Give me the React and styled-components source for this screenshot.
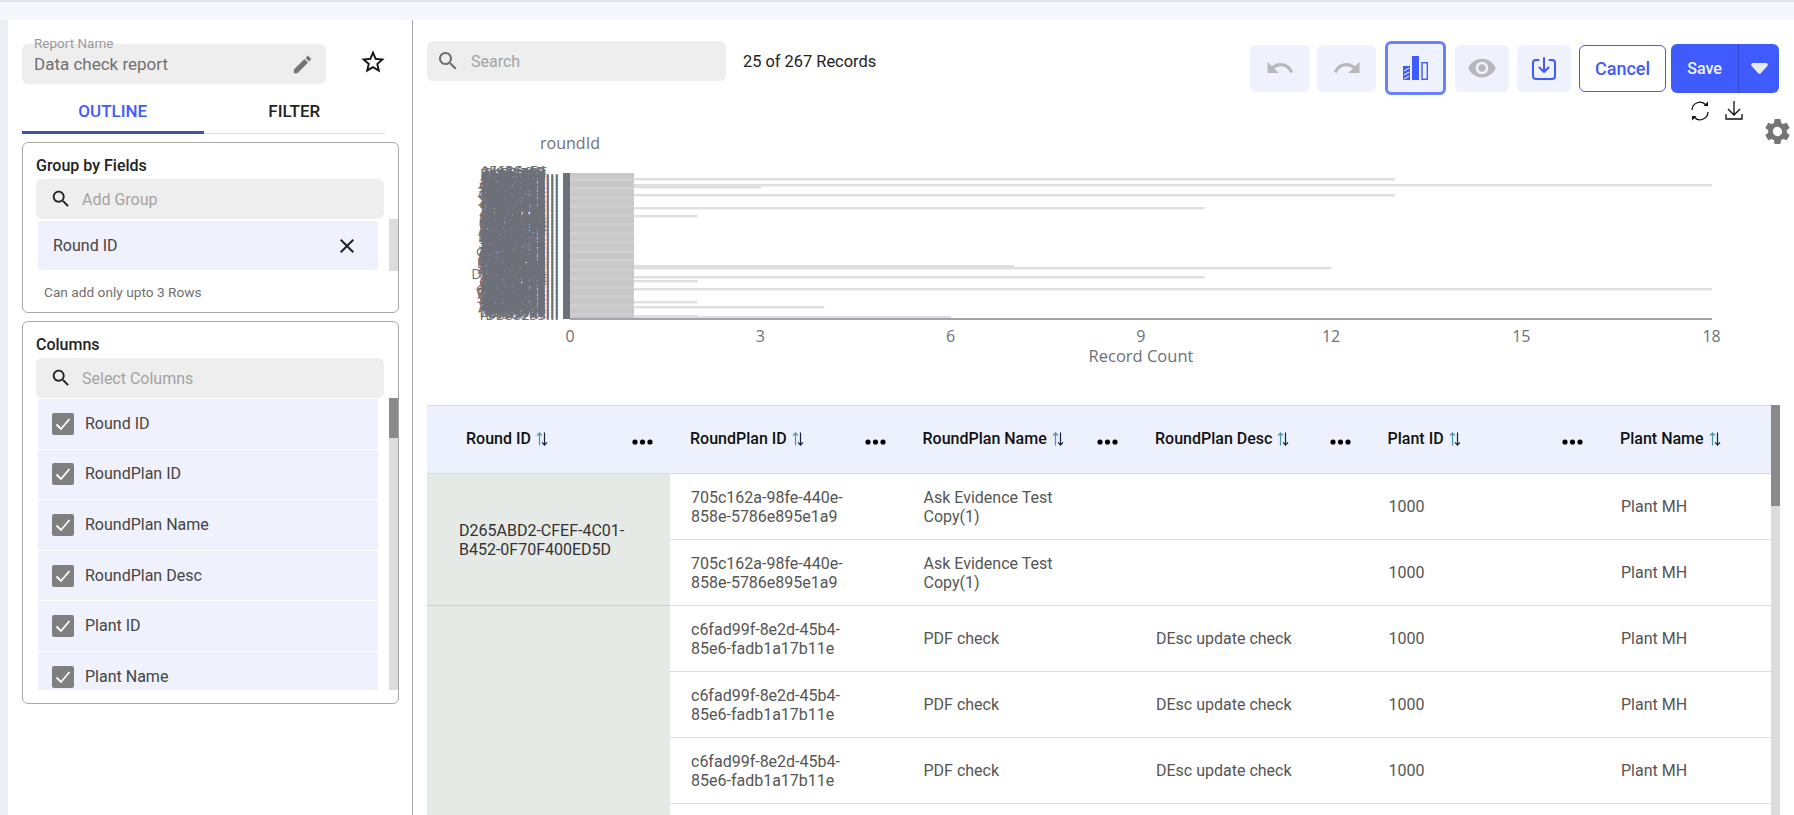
import React from "react";
import styled, { createGlobalStyle } from "styled-components";

const GlobalStyle = createGlobalStyle`
  html, body { margin: 0; padding: 0; height: 100%; overflow: hidden; background: #fff; }
  body { font-family: Roboto, "Liberation Sans", sans-serif; color: #333; }
  * { box-sizing: border-box; }
`;

// ---- page frame ----
const Page = styled.div`
  width: 1794px;
  height: 815px;
  display: flex;
  flex-direction: column;
  overflow: hidden;
`;
const TopStrip = styled.div`
  height: 20px;
  flex-shrink: 0;
  background: #f6f7fd;
  border-top: 2px solid #e2e3e9;
`;
const Body = styled.div`
  flex: 1;
  min-height: 0;
  display: flex;
`;
const LeftEdge = styled.div`
  width: 8px;
  background: #eceef4;
`;
const Sidebar = styled.aside`
  width: 405px;
  flex-shrink: 0;
  background: #fff;
  border-right: 1px solid #a9a9ad;
  padding: 24px 13px 0 14px;
`;
const Main = styled.main`
  flex: 1;
  min-width: 0;
  display: flex;
  flex-direction: column;
`;

// ---- sidebar ----
const NameRow = styled.div`
  display: flex;
  align-items: flex-start;
`;
const NameField = styled.div`
  position: relative;
  width: 304px;
  height: 40px;
  background: #eee;
  border-radius: 6px;
  display: flex;
  align-items: center;
  justify-content: space-between;
  padding: 0 12px 0 12px;
  font-size: 17px;
  color: #707070;
`;
const FloatLabel = styled.span`
  position: absolute;
  left: 12px;
  top: -8px;
  font-size: 13.5px;
  line-height: 14px;
  color: #9a9a9a;
`;
const StarWrap = styled.div`
  margin: 2px 0 0 33px;
  height: 32px;
  display: flex;
  align-items: center;
`;
const Tabs = styled.div`
  display: flex;
  width: 363px;
  height: 50px;
  border-bottom: 1px solid #dcdcdc;
`;
const Tab = styled.div`
  width: 182px;
  height: 50px;
  display: flex;
  align-items: center;
  justify-content: center;
  padding-top: 6px;
  font-size: 17px;
  font-weight: 500;
  color: ${(p) => (p.$active ? "#3f5bfe" : "#222")};
  border-bottom: 3px solid ${(p) => (p.$active ? "#3f51b5" : "transparent")};
`;
const Box = styled.section`
  width: 377px;
  margin-top: ${(p) => p.$mt}px;
  height: ${(p) => p.$h}px;
  border: 1px solid #a8a8a8;
  border-radius: 6px;
  padding-left: 13px;
`;
const BoxTitle = styled.h3`
  margin: 0;
  height: 36px;
  display: flex;
  align-items: center;
  padding: 9px 0 0 0;
  font-size: 16px;
  font-weight: 500;
  color: #222;
`;
const SearchField = styled.div`
  width: ${(p) => p.$w}px;
  height: 40px;
  background: #eee;
  border-radius: 6px;
  display: flex;
  align-items: center;
  gap: ${(p) => p.$gap}px;
  padding-left: ${(p) => p.$pl}px;
  font-size: 16px;
  color: #a3a3a3;
  flex-shrink: 0;
`;
const ListRow = styled.div`
  display: flex;
  padding-left: 2px;
  height: ${(p) => p.$h}px;
`;
const ListBody = styled.div`
  width: 340px;
  overflow: hidden;
  padding-top: ${(p) => p.$pt}px;
`;
const Chip = styled.div`
  height: 49px;
  background: #eff1fc;
  display: flex;
  align-items: center;
  justify-content: space-between;
  padding: 0 19px 0 15px;
  font-size: 16px;
  color: #444;
`;
const ColumnRow = styled.div`
  height: 49.6px;
  margin-bottom: 1px;
  background: #eff1fc;
  display: flex;
  align-items: center;
  gap: 11px;
  padding: 0 0 1px 14px;
  font-size: 16px;
  color: #444;
`;
const CheckBox = styled.span`
  width: 22px;
  height: 22px;
  background: #808080;
  border-radius: 2px;
  display: flex;
  align-items: center;
  justify-content: center;
  flex-shrink: 0;
  margin-top: 1px;
`;
const Track = styled.div`
  width: 9px;
  margin-left: ${(p) => p.$ml || 0}px;
  background: #dcdcdc;
  flex-shrink: 0;
`;
const Thumb = styled.div`
  height: ${(p) => p.$h}px;
  background: #8a8a8a;
`;
const Hint = styled.div`
  margin: 12px 0 0 8px;
  font-size: 13.7px;
  line-height: 18px;
  color: #6f6f6f;
`;

// ---- toolbar ----
const Toolbar = styled.div`
  height: 80px;
  flex-shrink: 0;
  display: flex;
  align-items: flex-start;
  padding: 21px 15px 0 14px;
`;
const Records = styled.div`
  margin-left: 17px;
  height: 40px;
  display: flex;
  align-items: center;
  font-size: 16.4px;
  color: #222;
`;
const Actions = styled.div`
  margin-left: auto;
  display: flex;
  align-items: center;
  height: 54px;
`;
const ToolButton = styled.div`
  width: ${(p) => p.$w}px;
  height: 47px;
  margin-left: ${(p) => p.$ml}px;
  border-radius: 6px;
  background: #eff1fc;
  display: flex;
  align-items: center;
  justify-content: center;
`;
const ChartToggle = styled.div`
  width: 61px;
  height: 54px;
  margin-left: 9px;
  background: #eff1fc;
  border: 3px solid #6a80ff;
  border-radius: 6px;
  display: flex;
  align-items: center;
  justify-content: center;
`;
const CancelButton = styled.div`
  width: 87px;
  height: 47px;
  margin-left: 8px;
  border: 1px solid #3f5bfe;
  border-radius: 6px;
  color: #3f5bfe;
  font-size: 18px;
  font-weight: 500;
  display: flex;
  align-items: center;
  justify-content: center;
`;
const SaveGroup = styled.div`
  margin-left: 5px;
  height: 49px;
  display: flex;
  border-radius: 6px;
  overflow: hidden;
  background: #3f5bfe;
  color: #f4f5ff;
`;
const SaveLabel = styled.div`
  width: 67px;
  display: flex;
  align-items: center;
  justify-content: center;
  font-size: 16px;
  font-weight: 500;
`;
const SaveCaret = styled.div`
  width: 41px;
  border-left: 1px solid #3349c8;
  display: flex;
  align-items: center;
  justify-content: center;
`;

// ---- chart ----
const ChartArea = styled.div`
  position: relative;
  height: 305px;
  flex-shrink: 0;
`;
const ChartSvg = styled.svg`
  display: block;
  width: 1381px;
  height: 305px;
`;
const ChartTools = styled.div`
  position: absolute;
  top: 0;
  left: 1277px;
  display: flex;
  gap: 15px;
`;
const GearWrap = styled.div`
  position: absolute;
  top: 16px;
  right: 1px;
`;

// ---- table ----
const TableRow = styled.div`
  flex: 1;
  min-height: 0;
  display: flex;
  padding-left: 14px;
`;
const TableWrap = styled.div`
  width: 1344px;
  overflow: hidden;
`;
const Table = styled.table`
  width: 1344px;
  table-layout: fixed;
  border-collapse: collapse;
`;
const Col = styled.col`
  width: ${(p) => p.$w}px;
`;
const Th = styled.th`
  height: 68px;
  padding: 0;
  background: #edf1fd;
  border-top: 1px solid #d8dbe6;
  border-bottom: 1px solid #d8dbe6;
  text-align: left;
  font-weight: 500;
`;
const HeadInner = styled.div`
  display: flex;
  align-items: center;
  justify-content: space-between;
  padding: 0 17px 2px ${(p) => p.$pl}px;
  font-size: 16px;
  color: #111;
`;
const HeadLabel = styled.span`
  display: flex;
  align-items: center;
  gap: 5px;
  white-space: nowrap;
`;
const Dots = styled.svg`
  margin-top: 6px;
  flex-shrink: 0;
`;
const Td = styled.td`
  height: 66px;
  padding: 0 22px 0 21px;
  border-bottom: 1px solid #dcdde0;
  font-size: 16px;
  line-height: 19px;
  color: #555;
`;
const GroupTd = styled(Td)`
  background: #e6eae6;
  padding: 0 20px 0 32px;
  color: #333;
  border-bottom: 1px solid #cdd1cd;
`;

const Icon = ({ d, size = 24, color = "#000" }) => (
  <svg width={size} height={size} viewBox="0 0 24 24" fill={color}>
    <path d={d} />
  </svg>
);

const paths = {
  pencil: "M3 17.25V21h3.75L17.81 9.94l-3.75-3.75L3 17.25zM20.71 7.04c.39-.39.39-1.02 0-1.41l-2.34-2.34c-.39-.39-1.02-.39-1.41 0l-1.83 1.83 3.75 3.75 1.83-1.83z",
  star: "M22 9.24l-7.19-.62L12 2 9.19 8.63 2 9.24l5.46 4.73L5.82 21 12 17.27 18.18 21l-1.63-7.03L22 9.24zM12 15.4l-3.76 2.27 1-4.28-3.32-2.88 4.38-.38L12 6.1l1.71 4.04 4.38.38-3.32 2.88 1 4.28L12 15.4z",
  search: "M15.5 14h-.79l-.28-.27C15.41 12.59 16 11.11 16 9.5 16 5.91 13.09 3 9.5 3S3 5.91 3 9.5 5.91 16 9.5 16c1.61 0 3.09-.59 4.23-1.57l.27.28v.79l5 4.99L20.49 19l-4.99-5zm-6 0C7.01 14 5 11.99 5 9.5S7.01 5 9.5 5 14 7.01 14 9.5 11.99 14 9.5 14z",
  close: "M19 6.41L17.59 5 12 10.59 6.41 5 5 6.41 10.59 12 5 17.59 6.41 19 12 13.41 17.59 19 19 17.59 13.41 12z",
  undo: "M12.5 8c-2.65 0-5.05.99-6.9 2.6L2 7v9h9l-3.62-3.62c1.39-1.16 3.16-1.88 5.12-1.88 3.54 0 6.55 2.31 7.6 5.5l2.37-.78C21.08 11.03 17.15 8 12.5 8z",
  redo: "M18.4 10.6C16.55 8.99 14.15 8 11.5 8c-4.65 0-8.58 3.03-9.96 7.22L3.9 16c1.05-3.19 4.05-5.5 7.6-5.5 1.95 0 3.73.72 5.12 1.88L13 16h9V7l-3.6 3.6z",
  eye: "M12 4.5C7 4.5 2.73 7.61 1 12c1.73 4.39 6 7.5 11 7.5s9.27-3.11 11-7.5c-1.73-4.39-6-7.5-11-7.5zM12 17c-2.76 0-5-2.24-5-5s2.24-5 5-5 5 2.24 5 5-2.24 5-5 5zm0-8c-1.66 0-3 1.34-3 3s1.34 3 3 3 3-1.34 3-3-1.34-3-3-3z",
  gear: "M19.14 12.94c.04-.3.06-.61.06-.94 0-.32-.02-.64-.07-.94l2.03-1.58c.18-.14.23-.41.12-.61l-1.92-3.32c-.12-.22-.37-.29-.59-.22l-2.39.96c-.5-.38-1.03-.7-1.62-.94l-.36-2.54c-.04-.24-.24-.41-.48-.41h-3.84c-.24 0-.43.17-.47.41l-.36 2.54c-.59.24-1.13.57-1.62.94l-2.39-.96c-.22-.08-.47 0-.59.22L2.74 8.87c-.12.21-.08.47.12.61l2.03 1.58c-.05.3-.09.63-.09.94s.02.64.07.94l-2.03 1.58c-.18.14-.23.41-.12.61l1.92 3.32c.12.22.37.29.59.22l2.39-.96c.5.38 1.03.7 1.62.94l.36 2.54c.05.24.24.41.48.41h3.84c.24 0 .44-.17.47-.41l.36-2.54c.59-.24 1.13-.56 1.62-.94l2.39.96c.22.08.47 0 .59-.22l1.92-3.32c.12-.22.07-.47-.12-.61l-2.01-1.58zM12 15.6c-1.98 0-3.6-1.62-3.6-3.6s1.62-3.6 3.6-3.6 3.6 1.62 3.6 3.6-1.62 3.6-3.6 3.6z",
};

const SortIcon = () => (
  <svg width="12" height="14" viewBox="0 0 12 14" fill="none" strokeWidth="1.2">
    <path d="M3.500 13.500V1M1 3.700l2.500-2.700L6 3.700" stroke="#4a93ab" />
    <path d="M8.500 .5V13M6 10.300l2.500 2.700 2.500-2.700" stroke="#14233f" />
  </svg>
);

const ThreeDots = () => (
  <Dots width="21" height="6" viewBox="0 0 21 6" fill="#000">
    <circle cx="3" cy="3" r="2.6" />
    <circle cx="10.5" cy="3" r="2.6" />
    <circle cx="18" cy="3" r="2.6" />
  </Dots>
);

const Check = () => (
  <svg width="16" height="14" viewBox="0 0 16 14" fill="none">
    <path d="M1.500 7.500l4.500 4.500L14.500 2" stroke="#fff" strokeWidth="1.8" />
  </svg>
);

// chart data: y position and record count of the long bars
const longBars = [
  [178, 13], [184, 18], [186, 3], [194, 13], [207, 10], [215, 2], [265, 7], [267, 12],
  [276, 10], [280, 2], [288, 18], [301, 2], [306, 4], [315, 2], [316, 6],
];
const UNIT = 63.42;
const hex = "0123456789ABCDEFabcdef";
const fakeIds = Array.from({ length: 190 }, (_, i) => {
  let s = "";
  let seed = (i + 7) * 48271;
  for (let k = 0; k < 8; k++) {
    seed = (seed * 48271 + 11) % 2147483647;
    s += hex[seed % hex.length];
  }
  return s;
});

const RoundChart = () => (
  <ChartSvg viewBox="413 100 1381 305">
    <text x="570" y="149" textAnchor="middle" fontFamily="Open Sans" fontSize="16" fill="#6e7079">roundId</text>
    {fakeIds.map((id, i) => (
      <text key={i} x="559" y={176 + i * 0.76} textAnchor="end" fontFamily="Open Sans" fontSize="14" fill="#6e7079">
        {id}<tspan fontSize="17">...</tspan>
      </text>
    ))}
    <rect x="563" y="173" width="7" height="146" fill="#6e7079" />
    <rect x="570" y="173" width="64" height="145" fill="#c8c8c8" />
    {Array.from({ length: 16 }, (_, i) => (
      <rect key={i} x="570" y={178 + i * 9} width="64" height="3" fill="#cecece" />
    ))}
    {longBars.map(([y, n], i) => (
      <rect key={i} x="634" y={y} width={n * UNIT - UNIT} height="2.400" fill="#dfdfdf" />
    ))}
    <rect x="570" y="318" width="1142" height="2" fill="#a3a3ab" />
    {[0, 3, 6, 9, 12, 15, 18].map((n) => (
      <text key={n} x={570 + n * UNIT} y="342" textAnchor="middle" fontFamily="Open Sans" fontSize="16" fill="#6e7079">{n}</text>
    ))}
    <text x="1141" y="362" textAnchor="middle" fontFamily="Open Sans" fontSize="16.500" fill="#6e7079">Record Count</text>
  </ChartSvg>
);

const columns = ["Round ID", "RoundPlan ID", "RoundPlan Name", "RoundPlan Desc", "Plant ID", "Plant Name"];
const colWidths = [243, 232.5, 232.5, 232.5, 232.5, 171];
const uuid1 = ["705c162a-98fe-440e-", "858e-5786e895e1a9"];
const uuid2 = ["c6fad99f-8e2d-45b4-", "85e6-fadb1a17b11e"];

const TwoLines = ({ lines }) => (
  <>
    {lines[0]}
    <br />
    {lines[1]}
  </>
);

const App = () => (
  <Page>
    <GlobalStyle />
    <TopStrip />
    <Body>
      <LeftEdge />
      <Sidebar>
        <NameRow>
          <NameField>
            <FloatLabel>Report Name</FloatLabel>
            Data check report
            <Icon d={paths.pencil} color="#757575" size={23} />
          </NameField>
          <StarWrap>
            <Icon d={paths.star} size={28} color="#111" />
          </StarWrap>
        </NameRow>
        <Tabs>
          <Tab $active>OUTLINE</Tab>
          <Tab>FILTER</Tab>
        </Tabs>
        <Box $mt={8} $h={171}>
          <BoxTitle>Group by Fields</BoxTitle>
          <SearchField $w={348} $gap={10} $pl={14}>
            <Icon d={paths.search} size={22} color="#222" />
            Add Group
          </SearchField>
          <ListRow $h={52}>
            <ListBody $pt={2}>
              <Chip>
                Round ID
                <Icon d={paths.close} size={24} color="#222" />
              </Chip>
            </ListBody>
            <Track $ml={11} />
          </ListRow>
          <Hint>Can add only upto 3 Rows</Hint>
        </Box>
        <Box $mt={8} $h={383}>
          <BoxTitle>Columns</BoxTitle>
          <SearchField $w={348} $gap={10} $pl={14}>
            <Icon d={paths.search} size={22} color="#222" />
            Select Columns
          </SearchField>
          <ListRow $h={292}>
            <ListBody $pt={1}>
              {["Round ID", "RoundPlan ID", "RoundPlan Name", "RoundPlan Desc", "Plant ID", "Plant Name"].map((name) => (
                <ColumnRow key={name}>
                  <CheckBox><Check /></CheckBox>
                  {name}
                </ColumnRow>
              ))}
            </ListBody>
            <Track $ml={11}>
              <Thumb $h={40} />
            </Track>
          </ListRow>
        </Box>
      </Sidebar>
      <Main>
        <Toolbar>
          <SearchField $w={299} $gap={11} $pl={9}>
            <Icon d={paths.search} size={24} color="#6f6f6f" />
            Search
          </SearchField>
          <Records>25 of 267 Records</Records>
          <Actions>
            <ToolButton $w={59} $ml={0}><Icon d={paths.undo} size={30} color="#b8b8bc" /></ToolButton>
            <ToolButton $w={59} $ml={8}><Icon d={paths.redo} size={30} color="#b8b8bc" /></ToolButton>
            <ChartToggle>
              <svg width="25" height="24" viewBox="0 0 25 24">
                <rect x="0" y="10" width="7" height="14" fill="#3f5bfe" />
                <path d="M1 15l5-3M1 19l5-3M1 23l5-3" stroke="#dfe3ff" strokeWidth="1.2" />
                <rect x="9" y="0" width="7" height="24" fill="#3f5bfe" />
                <rect x="19" y="6.700" width="5.300" height="16.600" fill="none" stroke="#3f5bfe" strokeWidth="1.400" />
              </svg>
            </ChartToggle>
            <ToolButton $w={54} $ml={9}><Icon d={paths.eye} size={30} color="#b8b8bc" /></ToolButton>
            <ToolButton $w={54} $ml={8}>
              <svg width="24" height="23" viewBox="0 0 24 23" fill="none" stroke="#3f5bfe" strokeWidth="2" strokeLinecap="round" strokeLinejoin="round">
                <path d="M6.500 3H4a3 3 0 0 0-3 3v13a3 3 0 0 0 3 3h16a3 3 0 0 0 3-3V6a3 3 0 0 0-3-3h-2.500" />
                <path d="M12 1v14M7.500 10.500l4.500 4.500 4.500-4.500" />
              </svg>
            </ToolButton>
            <CancelButton>Cancel</CancelButton>
            <SaveGroup>
              <SaveLabel>Save</SaveLabel>
              <SaveCaret>
                <svg width="17" height="11" viewBox="0 0 17 11" fill="#e8e8f0">
                  <path d="M2 0h13c1.600 0 2.400 1.800 1.400 3L9.800 10.200c-.7.800-1.900.8-2.600 0L.6 3C-.4 1.800.4 0 2 0z" />
                </svg>
              </SaveCaret>
            </SaveGroup>
          </Actions>
        </Toolbar>
        <ChartArea>
          <RoundChart />
          <ChartTools>
            <svg width="20" height="22" viewBox="0 0 20 22" fill="none" stroke="#111" strokeWidth="1.3">
              <path d="M2 10a8 8 0 0 1 14-5" />
              <path d="M18 12a8 8 0 0 1-14 5" />
              <path d="M13.500 6h4.500V1.500z" fill="#111" stroke="none" />
              <path d="M6.500 16H2v4.500z" fill="#111" stroke="none" />
            </svg>
            <svg width="18" height="20" viewBox="0 0 18 20" fill="none" stroke="#111" strokeWidth="1.3">
              <path d="M9 1v14M3 9l6 6 6-6M1 14v5h16v-5" />
            </svg>
          </ChartTools>
          <GearWrap><Icon d={paths.gear} size={31} color="#757575" /></GearWrap>
        </ChartArea>
        <TableRow>
          <TableWrap>
            <Table>
              <colgroup>
                {colWidths.map((w, i) => <Col key={i} $w={w} />)}
              </colgroup>
              <thead>
                <tr>
                  {columns.map((c, i) => (
                    <Th key={c}>
                      <HeadInner $pl={i === 0 ? 39 : 20}>
                        <HeadLabel>{c} <SortIcon /></HeadLabel>
                        {i < 5 && <ThreeDots />}
                      </HeadInner>
                    </Th>
                  ))}
                </tr>
              </thead>
              <tbody>
                {[0, 1].map((r) => (
                  <tr key={r}>
                    {r === 0 && (
                      <GroupTd rowSpan={2}>D265ABD2-CFEF-4C01-<br />B452-0F70F400ED5D</GroupTd>
                    )}
                    <Td><TwoLines lines={uuid1} /></Td>
                    <Td>Ask Evidence Test<br />Copy(1)</Td>
                    <Td />
                    <Td>1000</Td>
                    <Td>Plant MH</Td>
                  </tr>
                ))}
                {[0, 1, 2, 3].map((r) => (
                  <tr key={r}>
                    {r === 0 && <GroupTd rowSpan={4} />}
                    <Td>{r < 3 && <TwoLines lines={uuid2} />}</Td>
                    <Td>{r < 3 && "PDF check"}</Td>
                    <Td>{r < 3 && "DEsc update check"}</Td>
                    <Td>{r < 3 && "1000"}</Td>
                    <Td>{r < 3 && "Plant MH"}</Td>
                  </tr>
                ))}
              </tbody>
            </Table>
          </TableWrap>
          <Track>
            <Thumb $h={101} />
          </Track>
        </TableRow>
      </Main>
    </Body>
  </Page>
);

export default App;
